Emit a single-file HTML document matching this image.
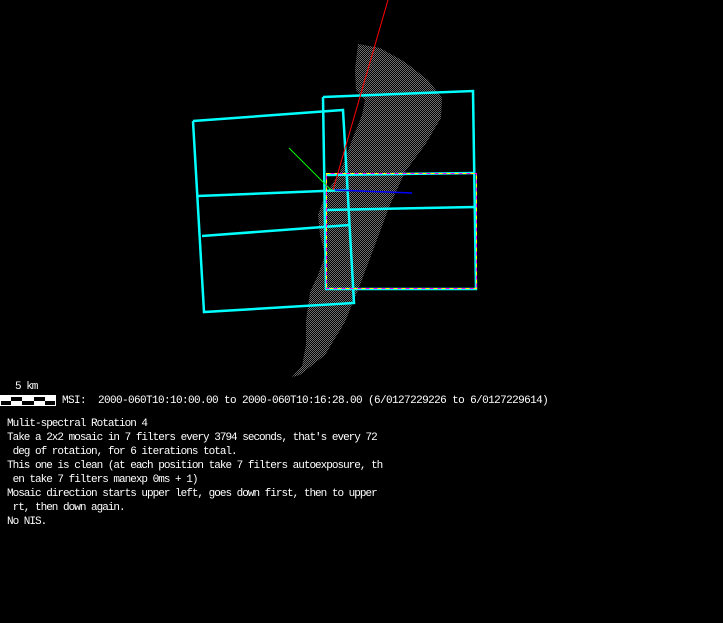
<!DOCTYPE html>
<html><head><meta charset="utf-8"><style>
html,body{margin:0;padding:0;background:#000;width:723px;height:623px;overflow:hidden}
.t{position:absolute;color:#fff;font-family:"Liberation Mono",monospace;font-size:11px;letter-spacing:-1px;white-space:pre;line-height:14px}
</style></head><body>
<svg width="723" height="623" style="position:absolute;left:0;top:0">
<defs>
<pattern id="dots" width="2" height="2" patternUnits="userSpaceOnUse">
<rect width="2" height="2" fill="#000"/>
<rect width="1" height="1" fill="#6e6e6e"/><rect x="1" y="1" width="1" height="1" fill="#6e6e6e"/>
</pattern>
</defs>
<polygon fill="url(#dots)" points="358,44 380,48 405,62 428,80 442,98 441,118 425,145 405,172 390,205 375,245 360,285 345,322 325,355 300,375 292,377 302,366 306,345 306,320 310,292 318,275 325,255 320,235 318,215 325,195 340,172 352,140 362,115 365,100 356,90 355,70"/>
<g fill="none" stroke="#00ffff" stroke-width="2.5">
<polyline points="193,121 343,110 354,303 204,312 193,121"/>
<line x1="198" y1="196" x2="347" y2="190"/>
<line x1="202" y1="236" x2="350" y2="225"/>
<polyline points="323,97 473,91 476,289 326,289 323,97"/>
<line x1="327" y1="175" x2="475" y2="173"/>
<line x1="327" y1="210" x2="475" y2="207"/>
</g>
<rect x="326.5" y="173.5" width="150" height="115" fill="none" stroke="#ff00ff" stroke-width="1"/>
<rect x="326.5" y="173.5" width="150" height="115" fill="none" stroke="#ffff00" stroke-width="1" stroke-dasharray="4,4"/>
<line x1="388" y1="0" x2="333" y2="190" stroke="#ff0000" stroke-width="1"/>
<line x1="289" y1="148" x2="331" y2="190" stroke="#00ff00" stroke-width="1"/>
<line x1="335" y1="190" x2="412" y2="193" stroke="#0000ff" stroke-width="1.5"/>
<rect x="0" y="395" width="56" height="11" fill="#fff"/>
<g fill="#000">
<rect x="11" y="397" width="11" height="4"/><rect x="34" y="397" width="11" height="4"/>
<rect x="1" y="401" width="10" height="4"/><rect x="22" y="401" width="12" height="4"/><rect x="45" y="401" width="10" height="4"/>
</g>
</svg>
<div class="t" style="left:15px;top:380px">5 km</div>
<div class="t" style="left:62px;top:394px;letter-spacing:-0.6px">MSI:  2000-060T10:10:00.00 to 2000-060T10:16:28.00 (6/0127229226 to 6/0127229614)</div>
<div class="t" style="left:7px;top:417px">Mulit-spectral Rotation 4
Take a 2x2 mosaic in 7 filters every 3794 seconds, that's every 72
 deg of rotation, for 6 iterations total.
This one is clean (at each position take 7 filters autoexposure, th
 en take 7 filters manexp 0ms + 1)
Mosaic direction starts upper left, goes down first, then to upper
 rt, then down again.
No NIS.</div>
</body></html>
